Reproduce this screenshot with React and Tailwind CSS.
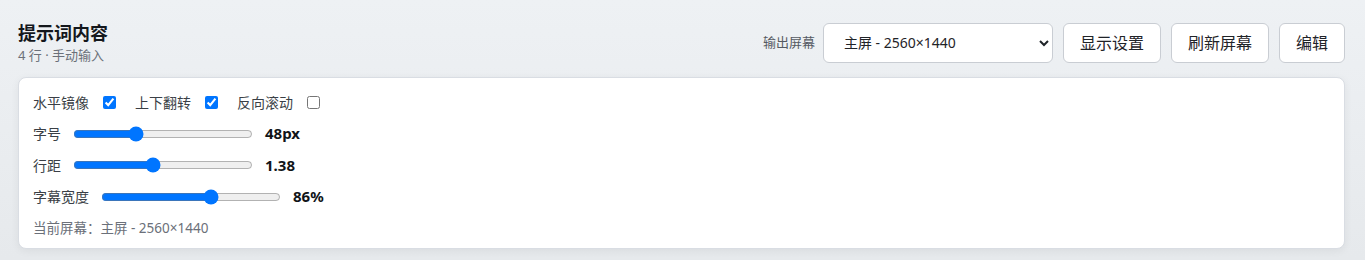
import React, { useState } from "react";

// Prompt panel header + display options card.
const App = () => {
  const [mirror, setMirror] = useState(true);
  const [flip, setFlip] = useState(true);
  const [reverse, setReverse] = useState(false);
  const [fontSize, setFontSize] = useState(48);
  const [lineHeight, setLineHeight] = useState(1.38);
  const [width, setWidth] = useState(86);
  const [screen, setScreen] = useState("main");

  const font = { fontFamily: '"Noto Sans", "Noto Sans CJK SC", sans-serif' };

  return (
    <div
      className="min-h-[260px] bg-gradient-to-b from-[#eef1f4] to-[#e6e9ec] pl-[18px] pr-[20px] pt-[21px] text-[#1f2328]"
      style={font}
    >
      {/* Header */}
      <div className="flex items-center justify-between">
        <div className="flex flex-col gap-[1px]">
          <h1 className="text-[18px] font-bold leading-[24px] text-[#14171c]">提示词内容</h1>
          <p className="text-[13px] leading-[18px] text-[#6b7079]">4 行 · 手动输入</p>
        </div>
        <div className="flex items-center">
          <span className="mr-[8px] text-[13px] text-[#555a62]">输出屏幕</span>
          <select
            value={screen}
            onChange={(e) => setScreen(e.target.value)}
            className="h-[40px] w-[230px] rounded-md border border-[#c9cdd3] bg-white pl-[16px] pr-[6px] text-[14px] text-[#1f2328]"
          >
            <option value="main">主屏 - 2560×1440</option>
            <option value="second">副屏 - 1920×1080</option>
          </select>
          <div className="ml-[10px] flex gap-[10px]">
            <button className="h-[40px] rounded-md border border-[#c9cdd3] bg-white px-[16px] text-[16px] text-[#1f2328]">
              显示设置
            </button>
            <button className="h-[40px] rounded-md border border-[#c9cdd3] bg-white px-[16px] text-[16px] text-[#1f2328]">
              刷新屏幕
            </button>
            <button className="h-[40px] rounded-md border border-[#c9cdd3] bg-white px-[16px] text-[16px] text-[#1f2328]">
              编辑
            </button>
          </div>
        </div>
      </div>

      {/* Options card */}
      <div className="mt-[13px] flex flex-col gap-[11.5px] rounded-lg border border-[#d9dde3] bg-white px-[14px] pb-[10px] pt-[14px] shadow-[0_2px_8px_rgba(0,0,0,0.06)]">
        <div className="flex h-[20px] items-center gap-[19px] text-[14px] text-[#3a3f46]">
          <label className="flex items-center gap-[14px]">
            水平镜像
            <input type="checkbox" checked={mirror} onChange={(e) => setMirror(e.target.checked)} className="m-0" />
          </label>
          <label className="flex items-center gap-[14px]">
            上下翻转
            <input type="checkbox" checked={flip} onChange={(e) => setFlip(e.target.checked)} className="m-0" />
          </label>
          <label className="flex items-center gap-[14px]">
            反向滚动
            <input type="checkbox" checked={reverse} onChange={(e) => setReverse(e.target.checked)} className="m-0" />
          </label>
        </div>

        <div className="flex h-[20px] items-center gap-[10px] text-[14px] text-[#3a3f46]">
          <span>字号</span>
          <input
            type="range"
            min={16}
            max={112}
            value={fontSize}
            onChange={(e) => setFontSize(Number(e.target.value))}
            className="mx-[2px] w-[180px]"
          />
          <span className="text-[15px] font-bold text-[#111418]">{fontSize}px</span>
        </div>

        <div className="flex h-[20px] items-center gap-[10px] text-[14px] text-[#3a3f46]">
          <span>行距</span>
          <input
            type="range"
            min={0.9}
            max={2}
            step={0.01}
            value={lineHeight}
            onChange={(e) => setLineHeight(Number(e.target.value))}
            className="mx-[2px] w-[180px]"
          />
          <span className="text-[15px] font-bold text-[#111418]">{lineHeight.toFixed(2)}</span>
        </div>

        <div className="flex h-[20px] items-center gap-[10px] text-[14px] text-[#3a3f46]">
          <span>字幕宽度</span>
          <input
            type="range"
            min={30}
            max={120}
            value={width}
            onChange={(e) => setWidth(Number(e.target.value))}
            className="mx-[2px] w-[180px]"
          />
          <span className="text-[15px] font-bold text-[#111418]">{width}%</span>
        </div>

        <p className="h-[20px] text-[13.5px] leading-[20px] text-[#6b7079]">当前屏幕：主屏 - 2560×1440</p>
      </div>
    </div>
  );
};

export default App;
